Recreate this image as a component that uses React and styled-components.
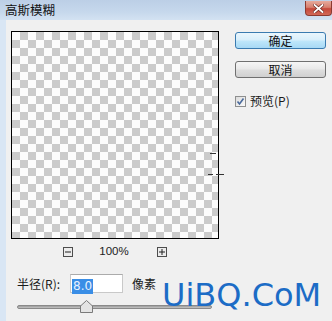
import React from 'react';
import styled, { createGlobalStyle } from 'styled-components';

const GlobalStyle = createGlobalStyle`
  html, body {
    margin: 0;
    padding: 0;
    background: #f0f0f0;
  }
  body {
    font-family: "Noto Sans CJK SC", "DejaVu Sans", sans-serif;
    font-size: 12px;
    color: #1a1a1a;
  }
`;

const Window = styled.div`
  position: relative;
  width: 332px;
  height: 321px;
  overflow: hidden;
  background: #f0f0f0;
`;

const TitleBar = styled.div`
  display: flex;
  align-items: flex-start;
  height: 20px;
  padding-left: 5px;
  background: linear-gradient(to bottom, #bccfe6 0%, #c6d8ec 60%, #d3e2f2 100%);
  box-sizing: border-box;
`;

const Title = styled.span`
  margin-top: 2px;
  font-size: 12.5px;
  line-height: 16px;
  color: #111;
`;

const CloseButton = styled.div`
  margin-left: auto;
  margin-top: 1px;
  width: 27px;
  height: 15px;
  display: flex;
  align-items: center;
  justify-content: center;
  border: 1px solid #8c3b31;
  border-top: none;
  border-radius: 0 0 4px 4px;
  background: linear-gradient(to bottom, #e6aa9c 0%, #d7806f 45%, #c5483a 55%, #d26a58 100%);
  box-sizing: border-box;
`;

const Body = styled.div`
  display: flex;
  height: 301px;
  padding: 11px 0 0 5px;
  border-left: 6px solid #d9e6f4;
  box-sizing: border-box;
`;

const LeftCol = styled.div`
  display: flex;
  flex-direction: column;
  width: 208px;
`;

const Preview = styled.div`
  position: relative;
  width: 208px;
  height: 208px;
  border: 1px solid #000;
  box-sizing: border-box;
  background: repeating-conic-gradient(#cbcbcb 0 25%, #fcfcfc 0 50%) 0 0 / 16px 16px;
`;

const Mark = styled.div`
  position: absolute;
  height: 1px;
  background: #333;
`;

const ZoomRow = styled.div`
  display: flex;
  align-items: center;
  justify-content: center;
  height: 11px;
  margin-top: 7px;
`;

const ZoomBtn = styled.div`
  width: 10px;
  height: 10px;
  border: 1px solid #4d4d4d;
  background: #ececec;
  box-sizing: border-box;
  display: flex;
  align-items: center;
  justify-content: center;
  margin-left: ${p => p.$gap || 0}px;
`;

const ZoomText = styled.span`
  margin-left: 26px;
  font-family: "Liberation Sans", Arial, sans-serif;
  font-size: 11.5px;
  line-height: 11px;
  color: #222;
`;

const RadiusRow = styled.div`
  display: flex;
  align-items: center;
  height: 19px;
  margin-top: 17px;
  padding-left: 6px;
`;

const Label = styled.span`
  font-size: 12px;
  line-height: 16px;
  width: 53px;
`;

const Input = styled.div`
  width: 53px;
  height: 19px;
  border: 1px solid #c9c9c9;
  border-top-color: #ababab;
  background: #fff;
  box-sizing: border-box;
  padding: 1px 0 0 1px;
`;

const Selected = styled.span`
  display: inline-block;
  padding: 0 1px;
  background: #3a8ee6;
  color: #e8f2ff;
  font-family: "DejaVu Sans", sans-serif;
  font-size: 12px;
  line-height: 15px;
`;

const Unit = styled.span`
  margin-left: 9px;
  font-size: 12px;
  line-height: 16px;
`;

const Slider = styled.div`
  position: relative;
  height: 13px;
  margin-top: 7px;
  margin-left: 6px;
  width: 195px;
`;

const Track = styled.div`
  position: absolute;
  left: 0;
  right: 0;
  top: 5px;
  height: 4px;
  border-radius: 2px;
  border: 1px solid #8a8a8a;
  background: linear-gradient(to bottom, #9c9c9c, #c4c4c4);
  box-sizing: border-box;
`;

const Thumb = styled.svg`
  position: absolute;
  left: 63px;
  top: 0;
`;

const RightCol = styled.div`
  display: flex;
  flex-direction: column;
  align-items: flex-start;
  margin-left: 16px;
  padding-top: 1px;
`;

const Button = styled.div`
  width: 91px;
  height: 17px;
  display: flex;
  align-items: center;
  justify-content: center;
  border-radius: 3px;
  box-sizing: border-box;
  font-size: 12px;
  line-height: 14px;
  color: #111;
  margin-bottom: 12px;
  border: 1px solid ${p => (p.$primary ? '#3a7bb0' : '#707070')};
  background: ${p =>
    p.$primary
      ? 'linear-gradient(to bottom, #eaf6fd 0%, #d9effb 45%, #bee6fa 55%, #a7d9f5 100%)'
      : 'linear-gradient(to bottom, #f6f6f6 0%, #e9e9e9 45%, #dddddd 55%, #d0d0d0 100%)'};
`;

const CheckRow = styled.label`
  display: flex;
  align-items: center;
  margin-top: 3px;
  font-size: 12px;
  line-height: 16px;
`;

const CheckBox = styled.div`
  width: 11px;
  height: 11px;
  margin-right: 4px;
  border: 1px solid #8e8f8f;
  box-sizing: border-box;
  background: linear-gradient(135deg, #dcdcdc, #fafafa);
  display: flex;
  align-items: center;
  justify-content: center;
`;

const Watermark = styled.div`
  position: absolute;
  left: 162px;
  top: 279px;
  font-family: "DejaVu Sans", Verdana, sans-serif;
  font-size: 32px;
  line-height: 32px;
  color: #1c6cc6;
  white-space: nowrap;
`;

export default function App() {
  return (
    <>
      <GlobalStyle />
      <Window>
        <TitleBar>
          <Title>高斯模糊</Title>
          <CloseButton>
            <svg width="11" height="9" viewBox="0 0 11 9">
              <path d="M1.5 1 L9.5 8 M9.5 1 L1.5 8" stroke="#6b2a22" strokeWidth="3.2" strokeLinecap="square" />
              <path d="M1.5 1 L9.5 8 M9.5 1 L1.5 8" stroke="#fff" strokeWidth="1.8" strokeLinecap="square" />
            </svg>
          </CloseButton>
        </TitleBar>
        <Body>
          <LeftCol>
            <Preview>
              <Mark style={{ left: 198, top: 121, width: 6 }} />
              <Mark style={{ left: 196, top: 142, width: 5 }} />
              <Mark style={{ left: 204, top: 142, width: 8 }} />
            </Preview>
            <ZoomRow>
              <ZoomBtn>
                <svg width="6" height="6" viewBox="0 0 6 6">
                  <path d="M0 3 H6" stroke="#222" strokeWidth="1" />
                </svg>
              </ZoomBtn>
              <ZoomText>100%</ZoomText>
              <ZoomBtn $gap={28}>
                <svg width="6" height="6" viewBox="0 0 6 6">
                  <path d="M0 3 H6 M3 0 V6" stroke="#222" strokeWidth="1" />
                </svg>
              </ZoomBtn>
            </ZoomRow>
            <RadiusRow>
              <Label>半径(R):</Label>
              <Input>
                <Selected>8.0</Selected>
              </Input>
              <Unit>像素</Unit>
            </RadiusRow>
            <Slider>
              <Track />
              <Thumb width="13" height="13" viewBox="0 0 13 13">
                <path d="M6.5 0.5 L12.5 6 V12.5 H0.5 V6 Z" fill="#e4e4e4" stroke="#7a7a7a" strokeWidth="1" />
              </Thumb>
            </Slider>
          </LeftCol>
          <RightCol>
            <Button $primary>确定</Button>
            <Button>取消</Button>
            <CheckRow>
              <CheckBox>
                <svg width="9" height="9" viewBox="0 0 9 9">
                  <path d="M1.5 4.5 L3.5 7 L7.5 1.5" fill="none" stroke="#4a6a9c" strokeWidth="1.6" />
                </svg>
              </CheckBox>
              预览(P)
            </CheckRow>
          </RightCol>
        </Body>
        <Watermark>UiBQ.CoM</Watermark>
      </Window>
    </>
  );
}
